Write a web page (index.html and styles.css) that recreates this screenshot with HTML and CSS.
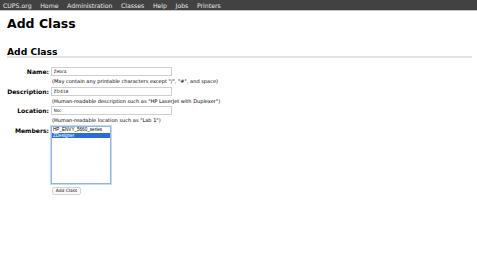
FILE: index.html
```html
<!DOCTYPE html>
<html lang="en">
<head>
  <meta charset="UTF-8">
  <title>Add Class - CUPS</title>
  <link rel="stylesheet" href="styles.css">
</head>
<body>
  <div class="nav">
    <a href="#">CUPS.org</a>
    <a href="#">Home</a>
    <a href="#">Administration</a>
    <a href="#">Classes</a>
    <a href="#">Help</a>
    <a href="#">Jobs</a>
    <a href="#">Printers</a>
  </div>

  <h1>Add Class</h1>
  <h2>Add Class</h2>

  <!-- class form -->
  <div class="form">
    <div class="label">Name:</div>
    <div class="field">
      <input type="text" value="Zebra">
      <div class="help">(May contain any printable characters except "/", "#", and space)</div>
    </div>

    <div class="label">Description:</div>
    <div class="field">
      <input type="text" value="ZD418">
      <div class="help">(Human-readable description such as "HP LaserJet with Duplexer")</div>
    </div>

    <div class="label">Location:</div>
    <div class="field">
      <input type="text" value="Nsc">
      <div class="help">(Human-readable location such as "Lab 1")</div>
    </div>

    <div class="label">Members:</div>
    <div class="field members">
      <div class="listbox">
        <div class="option">HP_ENVY_5660_series</div>
        <div class="option selected">ZDesigner</div>
      </div>
    </div>

    <div class="label"></div>
    <div class="field">
      <button>Add Class</button>
    </div>
  </div>
</body>
</html>
```

FILE: styles.css
```css
body {
  margin: 0;
  font-family: "DejaVu Sans", sans-serif;
  color: #000;
  background: #fff;
}
.nav {
  display: flex;
  align-items: center;
  gap: 8.6px;
  height: 10px;
  padding-left: 3px;
  background: #424242;
  border-bottom: 1px solid #c4c4c4;
  font-size: 6.2px;
}
.nav a {
  color: #e8e8e8;
  text-decoration: none;
}
h1 {
  margin: 0;
  padding: 5px 7px 0;
  font-size: 12.5px;
  line-height: 16px;
}
h2 {
  margin: 15px 5px 0 7px;
  font-size: 9.2px;
  line-height: 9px;
  border-bottom: 2px solid #e3e3e3;
}
.form {
  display: grid;
  grid-template-columns: 49px 1fr;
  column-gap: 2px;
  margin-top: 9px;
}
.label {
  font-weight: bold;
  font-size: 6.1px;
  line-height: 9px;
  text-align: right;
}
.field {
  height: 19.5px;
}
.members {
  height: 58.5px;
}
input {
  display: block;
  box-sizing: border-box;
  width: 121px;
  height: 9px;
  margin: 0;
  padding: 0 1.5px;
  border: 1px solid #cfcfcf;
  font-family: "DejaVu Sans", sans-serif;
  font-size: 4.4px;
  color: #222;
}
.help {
  margin-top: 2px;
  font-size: 5.05px;
  line-height: 6px;
  padding-left: 1px;
  white-space: nowrap;
}
.listbox {
  box-sizing: border-box;
  width: 60px;
  height: 58px;
  border: 1px solid #8fb6e6;
  box-shadow: 0 0 0 1px #c6dbf3;
  font-family: "Liberation Sans", sans-serif;
  font-size: 4.6px;
  line-height: 5.5px;
  padding-top: 0.5px;
}
.option {
  padding-left: 1px;
}
.option.selected {
  background: #2c6dd5;
  color: #fff;
}
button {
  display: block;
  margin: 2.5px 0 0 1px;
  height: 8px;
  width: 29px;
  padding: 0;
  background: #fafafa;
  border: 1px solid #d4d4d4;
  border-radius: 2px;
  font-family: "DejaVu Sans", sans-serif;
  font-size: 4.4px;
  color: #111;
}
```
